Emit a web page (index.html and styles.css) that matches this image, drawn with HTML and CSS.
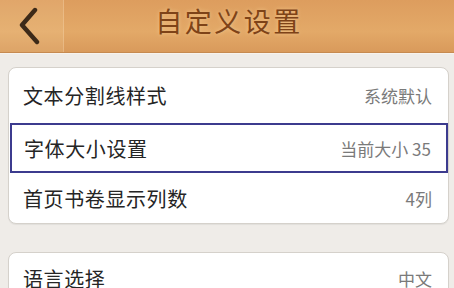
FILE: index.html
```html
<!DOCTYPE html>
<html lang="zh">
<head>
<meta charset="utf-8">
<title>自定义设置</title>
<link rel="stylesheet" href="styles.css">
</head>
<body>
<header class="topbar">
  <div class="back">
    <svg width="26" height="40" viewBox="0 0 26 40" aria-hidden="true">
      <path d="M19 3 L6 18 L21 35" fill="none" stroke="#3d2a18" stroke-width="4.4" stroke-linecap="round" stroke-linejoin="round"/>
    </svg>
  </div>
  <h1 class="title">自定义设置</h1>
</header>
<main class="content">
  <section class="card">
    <div class="row row-first"><span class="label">文本分割线样式</span><span class="value">系统默认</span></div>
    <div class="row row-active"><span class="label">字体大小设置</span><span class="value">当前大小 35</span></div>
    <div class="row"><span class="label">首页书卷显示列数</span><span class="value">4列</span></div>
  </section>
  <section class="card card-second">
    <div class="row"><span class="label">语言选择</span><span class="value">中文</span></div>
  </section>
</main>
</body>
</html>
```
FILE: styles.css
```css
html, body {
  margin: 0;
  padding: 0;
}
body {
  width: 454px;
  height: 288px;
  overflow: hidden;
  background: #efece8;
  font-family: "Noto Sans CJK SC", "Noto Sans", sans-serif;
}
.topbar {
  height: 52px;
  display: flex;
  align-items: center;
  position: relative;
  background: linear-gradient(#dd9d5e, #e3a968 60%, #d99a5b);
  border-bottom: 1px solid #c68a50;
  box-shadow: 0 1px 0 #f7f3ee;
}
.back {
  width: 64px;
  height: 52px;
  display: flex;
  align-items: center;
  padding-left: 16px;
  box-sizing: border-box;
  background: rgba(255, 235, 200, 0.12);
  border-right: 1px solid rgba(255, 230, 200, 0.25);
}
.back svg {
  margin-top: 2px;
}
.title {
  position: absolute;
  left: 0;
  right: 0;
  top: 0;
  margin: 0;
  text-align: center;
  font-size: 27px;
  font-weight: 400;
  letter-spacing: 2.5px;
  line-height: 42px;
  color: #7e4318;
  text-shadow: 0 0 4px rgba(255, 220, 160, 0.6);
  padding-left: 4px;
}
.content {
  padding: 14px 5px 0 8px;
}
.card {
  background: #fff;
  border: 1px solid #d5d1cb;
  border-radius: 8px;
  box-shadow: 0 1px 1px rgba(0, 0, 0, 0.06);
}
.card-second {
  margin-top: 28px;
}
.row {
  height: 50px;
  display: flex;
  align-items: center;
  justify-content: space-between;
  padding: 0 16px 0 14px;
  box-sizing: border-box;
}
.row-first {
  height: 55px;
}
.row-active {
  margin: 0 0 0 1px;
  border: 2px solid #3c3b8e;
  padding: 0 15px 0 12px;
}
.label {
  font-size: 20px;
  letter-spacing: 0.6px;
  color: #252525;
}
.value {
  font-size: 17px;
  color: #7a7a7a;
}
```
